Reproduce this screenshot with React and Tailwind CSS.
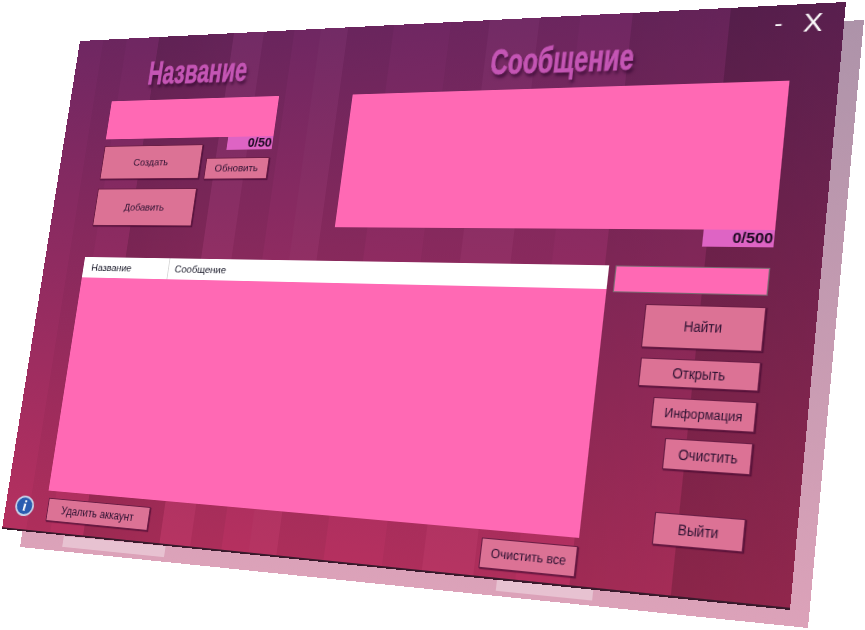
const Btn = ({ className, children, squeeze }) => (
  <button className={`flex items-center justify-center whitespace-nowrap border border-[#6a1d45] bg-[#dc7295] text-[#2a1030] shadow-[1px_1px_1px_rgba(50,0,40,0.5)] ${className}`}>
    <span className={squeeze}>{children}</span>
  </button>
);

export default function App() {
  return (
    <div className="relative h-[630px] w-[865px] overflow-hidden bg-white font-['Liberation_Sans',sans-serif] blur-[0.5px]">
      {/* soft shadow copy of the window */}
      <div className="absolute left-[18px] top-[18px]">
        <div className="flex h-[580px] w-[800px] origin-top-left items-end bg-[linear-gradient(180deg,#ad93a9,#dca2b9)] pb-[5px] [transform:matrix3d(0.75464,-0.04923,0,-0.00023979,-0.13463,0.80348,0,-0.00007164,0,0,1,0,80,41,0,1)]">
          <div className="ml-[52px] h-[12px] w-[122px] bg-white/35" />
          <div className="ml-[350px] h-[12px] w-[90px] bg-white/35" />
        </div>
      </div>

      {/* window */}
      <div className="absolute left-0 top-0 flex h-[580px] w-[800px] origin-top-left flex-col border-b-2 border-[#3a1a2c] [background:linear-gradient(90deg,transparent_0,transparent_30px,rgba(0,0,0,.04)_30px,rgba(0,0,0,.04)_60px,transparent_60px,transparent_100px,rgba(0,0,0,.14)_100px,rgba(0,0,0,.1)_190px,rgba(255,255,255,.02)_190px,rgba(255,255,255,.02)_225px,rgba(0,0,0,.05)_225px,rgba(0,0,0,.05)_260px,transparent_260px,transparent_290px,rgba(255,255,255,.02)_290px,rgba(255,255,255,.02)_320px,rgba(0,0,0,.05)_320px,rgba(0,0,0,.05)_370px,transparent_370px,transparent_430px,rgba(0,0,0,.04)_430px,rgba(0,0,0,.04)_470px,rgba(255,255,255,.02)_470px,rgba(255,255,255,.02)_520px,rgba(0,0,0,.04)_520px,rgba(0,0,0,.04)_560px,transparent_560px,transparent_610px,rgba(0,0,0,.12)_610px,rgba(0,0,0,.09)_700px,rgba(0,0,0,.24)_700px,rgba(0,0,0,.2)_800px),linear-gradient(180deg,#6f2762,#b5305f)] [transform:matrix3d(0.75464,-0.04923,0,-0.00023979,-0.13463,0.80348,0,-0.00007164,0,0,1,0,80,41,0,1)]">
        {/* top */}
        <div className="flex h-[262px] shrink-0 items-start">
          <div className="ml-[53px] flex w-[200px] flex-col">
            <div className="mt-[26px] flex h-[36px] items-center justify-center whitespace-nowrap">
              <span className="inline-block scale-x-[0.66] text-[38px] font-bold text-[#c455b4] [-webkit-text-stroke:0.8px_#c455b4] [text-shadow:3px_4px_4px_rgba(40,0,40,0.6)]">
                Название
              </span>
            </div>
            <div className="mt-[14px] h-[46px] bg-[#ff69b4]" />
            <div className="flex h-[15px] w-[52px] items-center justify-end self-end bg-[#de64c4] pr-[1px] text-[14px] font-bold text-[#1a0820]">
              0/50
            </div>
            <div className="-mt-[7px] flex items-start">
              <div className="flex flex-col">
                <Btn className="h-[40px] w-[120px] text-[11px]">Создать</Btn>
                <Btn className="mt-[11px] h-[44px] w-[120px] text-[11px]">Добавить</Btn>
              </div>
              <Btn className="ml-[6px] mt-[16px] h-[25px] w-[73px] text-[11px]">Обновить</Btn>
            </div>
          </div>

          <div className="ml-[82px] flex w-[465px] flex-col">
            <div className="mt-[29px] flex h-[36px] items-center">
              <div className="ml-[141px] flex w-[140px] justify-center whitespace-nowrap">
                <span className="inline-block scale-x-[0.64] text-[38px] font-bold text-[#c455b4] [-webkit-text-stroke:0.8px_#c455b4] [text-shadow:3px_4px_4px_rgba(40,0,40,0.6)]">
                  Сообщение
                </span>
              </div>
              <div className="ml-[124px] -mt-[56px] text-[22px] leading-none text-white">-</div>
              <div className="ml-[18px] -mt-[56px] text-[25px] leading-none text-white">X</div>
            </div>
            <div className="mt-[12px] h-[148px] w-[423px] bg-[#ff69b4]" />
            <div className="ml-[361px] flex h-[17px] w-[62px] items-center justify-end bg-[#de64c4] pr-[1px] text-[14px] font-bold text-[#1a0820]">
              0/500
            </div>
          </div>
        </div>

        {/* middle */}
        <div className="flex h-[270px] shrink-0 items-start">
          <div className="ml-[50px] flex h-[270px] w-[564px] flex-col bg-[#ff69b4]">
            <div className="flex h-[24px] items-center bg-white text-[11px] text-[#1a1a2a]">
              <div className="h-full w-[104px] border-r border-[#d8d8d8] pl-[10px] leading-[24px]">Название</div>
              <div className="pl-[7px]">Сообщение</div>
            </div>
          </div>
          <div className="ml-[3px] flex w-[140px] flex-col items-end">
            <div className="h-[27px] w-[137px] border border-[#7a6a72] bg-[#ff69b4]" />
            <Btn className="mt-[11px] h-[43px] w-[106px] text-[14px]" squeeze="inline-block scale-x-[0.84]">Найти</Btn>
            <Btn className="mt-[10px] h-[28px] w-[105px] text-[14px]" squeeze="inline-block scale-x-[0.84]">Открыть</Btn>
            <Btn className="mt-[10px] h-[29px] w-[90px] text-[13px]" squeeze="inline-block scale-x-[0.85]">Информация</Btn>
            <Btn className="mt-[10px] h-[30px] w-[76px] text-[14px]" squeeze="inline-block scale-x-[0.84]">Очистить</Btn>
            <Btn className="mt-[41px] h-[31px] w-[78px] text-[14px]" squeeze="inline-block scale-x-[0.84]">Выйти</Btn>
          </div>
        </div>

        {/* bottom */}
        <div className="flex items-start pt-[8px]">
          <div className="ml-[12px] flex h-[23px] w-[23px] items-center justify-center rounded-full border-2 border-[#c8d4ea] bg-[#2a5cb0] font-['Liberation_Serif',serif] text-[17px] font-bold italic leading-none text-white">
            i
          </div>
          <Btn className="ml-[17px] h-[26px] w-[122px] text-[12px]" squeeze="inline-block scale-x-[0.95]">Удалить аккаунт</Btn>
          <Btn className="ml-[350px] h-[30px] w-[90px] text-[13px]" squeeze="inline-block scale-x-[0.87]">Очистить все</Btn>
        </div>
      </div>
    </div>
  );
}
